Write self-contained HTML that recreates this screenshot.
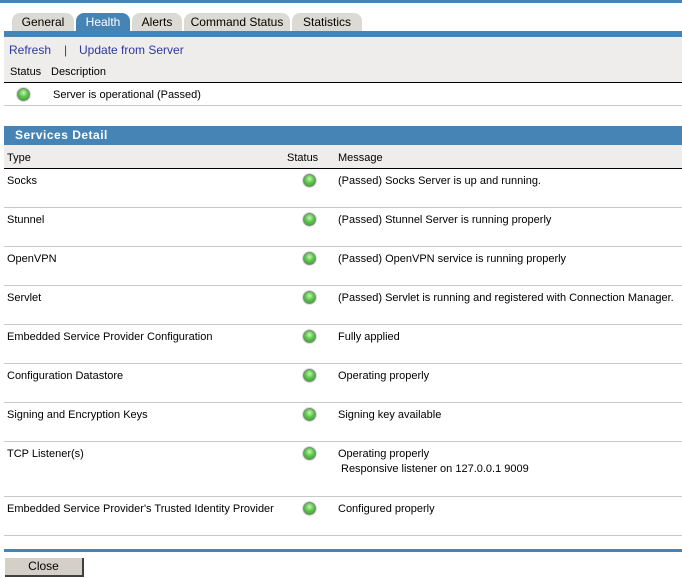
<!DOCTYPE html><html><head><style>
body{margin:0;width:682px;height:578px;background:#fff;font-family:"Liberation Sans",sans-serif;font-size:11px;color:#000;position:relative;overflow:hidden}
.a{position:absolute;white-space:nowrap}
.t{margin-top:1px}
.l{position:absolute;left:4px;width:678px;height:1px;background:#c8c8c8}
.dot{position:absolute;width:11px;height:11px;border-radius:50%;background:radial-gradient(circle at 50% 35%,#c8f4b8 0,#5cc84a 45%,#2f9a2a 100%);border:1px solid #7a8a78;box-shadow:0 0 0 1px #dcdcdc}
.tab{position:absolute;top:13px;height:18px;background:#dcdad4;border-radius:8px 8px 0 0;font-size:12px;line-height:19px;text-align:center;color:#000}
</style></head><body>
<div class="a" style="left:0;top:0;width:682px;height:3px;background:#4584b5"></div>
<div class="tab" style="left:12px;width:62px">General</div>
<div class="tab" style="left:76px;width:54px;background:#4584b5;color:#fff">Health</div>
<div class="tab" style="left:132px;width:50px">Alerts</div>
<div class="tab" style="left:184px;width:106px">Command Status</div>
<div class="tab" style="left:292px;width:70px">Statistics</div>
<div class="a" style="left:4px;top:31px;width:678px;height:6px;background:#4584b5"></div>
<div class="a" style="left:4px;top:37px;width:678px;height:45px;background:#eeedeb"></div>
<div class="a" style="left:9px;top:43px;color:#2b3a9a;font-size:12px">Refresh</div>
<div class="a" style="left:64px;top:43px;color:#6a2a7a;font-size:12px">|</div>
<div class="a" style="left:79px;top:43px;color:#2b3a9a;font-size:12px">Update from Server</div>
<div class="a" style="left:10px;top:66px">Status</div>
<div class="a" style="left:51px;top:66px">Description</div>
<div class="a" style="left:4px;top:82px;width:678px;height:1px;background:#000"></div>
<div class="dot" style="left:17px;top:88px"></div>
<div class="a" style="left:53px;top:89px">Server is operational (Passed)</div>
<div class="l" style="top:105px"></div>
<div class="a" style="left:4px;top:126px;width:678px;height:19px;background:#4584b5;color:#fff;font-weight:bold;font-size:12px;line-height:19px;padding-left:11px;letter-spacing:.5px;box-sizing:border-box">Services Detail</div>
<div class="a" style="left:4px;top:145px;width:678px;height:23px;background:#eeedeb"></div>
<div class="a" style="left:7px;top:152px">Type</div>
<div class="a" style="left:287px;top:152px">Status</div>
<div class="a" style="left:338px;top:152px">Message</div>
<div class="a" style="left:4px;top:168px;width:678px;height:1px;background:#000"></div>

<div class="a t" style="left:7px;top:174px">Socks</div><div class="dot" style="left:303px;top:174px"></div><div class="a t" style="left:338px;top:174px">(Passed) Socks Server is up and running.</div>
<div class="l" style="top:207px"></div>
<div class="a t" style="left:7px;top:213px">Stunnel</div><div class="dot" style="left:303px;top:213px"></div><div class="a t" style="left:338px;top:213px">(Passed) Stunnel Server is running properly</div>
<div class="l" style="top:246px"></div>
<div class="a t" style="left:7px;top:252px">OpenVPN</div><div class="dot" style="left:303px;top:252px"></div><div class="a t" style="left:338px;top:252px">(Passed) OpenVPN service is running properly</div>
<div class="l" style="top:285px"></div>
<div class="a t" style="left:7px;top:291px">Servlet</div><div class="dot" style="left:303px;top:291px"></div><div class="a t" style="left:338px;top:291px">(Passed) Servlet is running and registered with Connection Manager.</div>
<div class="l" style="top:324px"></div>
<div class="a t" style="left:7px;top:330px">Embedded Service Provider Configuration</div><div class="dot" style="left:303px;top:330px"></div><div class="a t" style="left:338px;top:330px">Fully applied</div>
<div class="l" style="top:363px"></div>
<div class="a t" style="left:7px;top:369px">Configuration Datastore</div><div class="dot" style="left:303px;top:369px"></div><div class="a t" style="left:338px;top:369px">Operating properly</div>
<div class="l" style="top:402px"></div>
<div class="a t" style="left:7px;top:408px">Signing and Encryption Keys</div><div class="dot" style="left:303px;top:408px"></div><div class="a t" style="left:338px;top:408px">Signing key available</div>
<div class="l" style="top:441px"></div>
<div class="a t" style="left:7px;top:447px">TCP Listener(s)</div><div class="dot" style="left:303px;top:447px"></div><div class="a t" style="left:338px;top:447px">Operating properly</div>
<div class="a t" style="left:341px;top:462px">Responsive listener on 127.0.0.1 9009</div>
<div class="l" style="top:496px"></div>
<div class="a t" style="left:7px;top:502px">Embedded Service Provider's Trusted Identity Provider</div><div class="dot" style="left:303px;top:502px"></div><div class="a t" style="left:338px;top:502px">Configured properly</div>
<div class="l" style="top:535px"></div>
<div class="a" style="left:4px;top:549px;width:678px;height:3px;background:#4584b5"></div>
<div class="a" style="left:5px;top:558px;width:79px;height:19px;background:#d4d0c8;border-right:2px solid #404040;border-bottom:2px solid #404040;box-sizing:border-box;text-align:center;font-size:12px;line-height:17px">Close</div>
</body></html>
